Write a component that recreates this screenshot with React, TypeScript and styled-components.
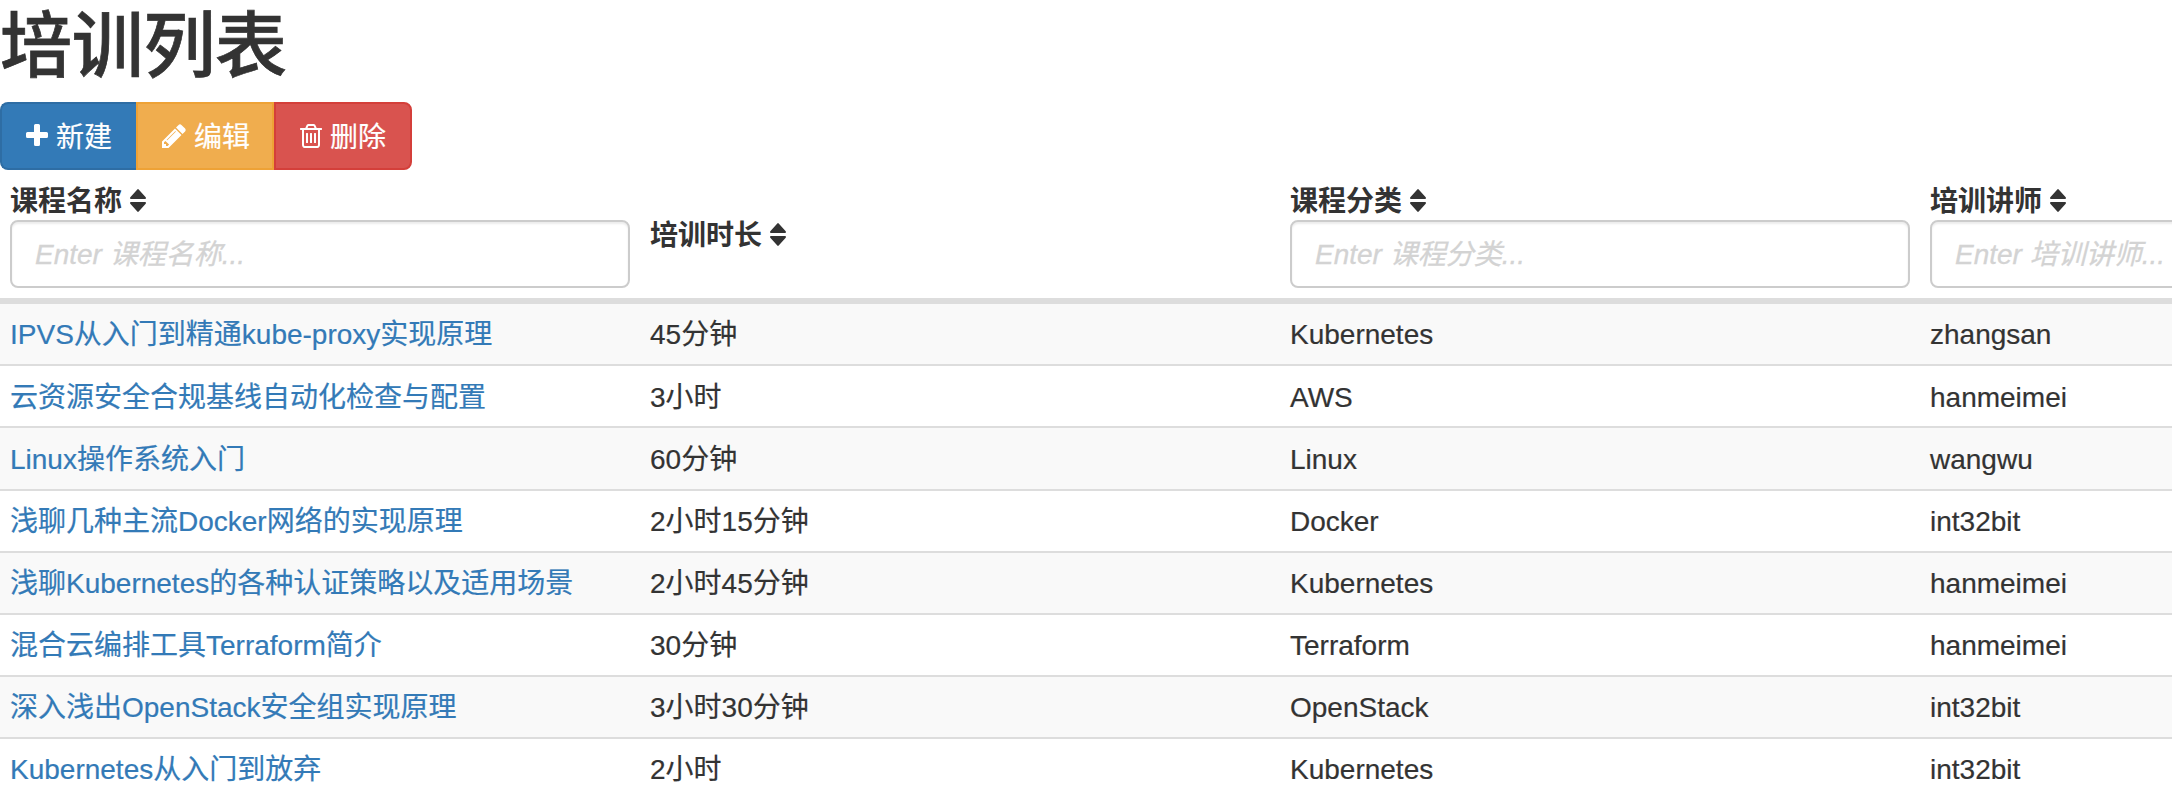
import React from "react";
import styled, { createGlobalStyle } from "styled-components";

const GlobalStyle = createGlobalStyle`
  *, *::before, *::after { box-sizing: border-box; }
  html, body { margin: 0; background: #fff; overflow: hidden; }
  body {
    color: #333;
    font-family: "Liberation Sans", "Noto Sans CJK SC", sans-serif;
    font-size: 28px;
    line-height: 40px;
    -webkit-text-stroke: 0.2px currentColor;
  }
`;

const Page = styled.main`
  width: 2172px;
  height: 805px;
  overflow: hidden;
`;

const Title = styled.h1`
  margin: 0;
  height: 102px;
  padding-top: 7px;
  font-size: 72px;
  font-weight: 500;
  line-height: 79px;
  letter-spacing: -0.3px;
  -webkit-text-stroke: 0.7px currentColor;
`;

const ButtonGroup = styled.div`
  display: flex;
  height: 68px;
`;

const tones = {
  primary: { fill: "#337ab7", edge: "#2e6da4" },
  warning: { fill: "#f0ad4e", edge: "#eea236" },
  danger: { fill: "#d9534f", edge: "#d43f3a" },
};

const Button = styled.button<{ $tone: keyof typeof tones }>`
  display: flex;
  align-items: center;
  width: 138px;
  margin: 0;
  padding: 0 0 0 24px;
  border: 2px solid ${(p) => tones[p.$tone].edge};
  background: ${(p) => tones[p.$tone].fill};
  color: #fff;
  font: inherit;
  white-space: nowrap;

  &:first-child { width: 136px; border-right: 0; border-radius: 8px 0 0 8px; }
  &:last-child { border-radius: 0 8px 8px 0; }
`;

const ButtonIcon = styled.svg<{ $width: number }>`
  flex: none;
  width: ${(p) => p.$width}px;
  height: 28px;
  margin-right: 8px;
  fill: currentColor;
`;

const ButtonLabel = styled.span`
  padding-top: 3px;
`;

const Table = styled.table`
  display: block;
  width: 2560px;
`;

const HeadGroup = styled.thead`
  display: block;
`;

const BodyGroup = styled.tbody`
  display: block;
`;

const HeadRow = styled.tr`
  display: grid;
  grid-template-columns: repeat(4, 640px);
  height: 132.2px;
  border-bottom: 4px solid #ddd;
`;

const HeadCell = styled.th`
  display: flex;
  flex-direction: column;
  justify-content: center;
  padding: 10px;
  text-align: left;
  font-weight: 700;
  -webkit-text-stroke: 0;
`;

const HeadLabel = styled.div`
  display: flex;
  align-items: center;
  height: 40px;
`;

const LabelText = styled.span`
  padding-top: 3px;
`;

const SortIcon = styled.svg`
  width: 16px;
  height: 23px;
  margin-left: 8px;
  fill: currentColor;
`;

const FilterInput = styled.input`
  display: block;
  width: 100%;
  height: 68px;
  padding: 13px 23px 11px;
  border: 2px solid #ccc;
  border-radius: 8px;
  box-shadow: inset 0 2px 2px rgba(0, 0, 0, 0.075);
  background: #fff;
  font: inherit;
  font-weight: 400;
  -webkit-text-stroke: 0.3px currentColor;

  &::placeholder {
    color: #d3d3d3;
    font-style: italic;
    opacity: 1;
  }
`;

const Row = styled.tr`
  display: grid;
  grid-template-columns: repeat(4, 640px);
  height: 62.14px;
  border-top: 2px solid #ddd;

  &:nth-child(odd) { background: #f9f9f9; }
`;

const Cell = styled.td`
  padding: 11.3px 10px 8.7px;
  white-space: nowrap;
`;

const CourseLink = styled.a`
  color: #337ab7;
  text-decoration: none;
`;

const columns = [
  { label: "课程名称", filter: true },
  { label: "培训时长", filter: false },
  { label: "课程分类", filter: true },
  { label: "培训讲师", filter: true },
];

const courses = [
  ["IPVS从入门到精通kube-proxy实现原理", "45分钟", "Kubernetes", "zhangsan"],
  ["云资源安全合规基线自动化检查与配置", "3小时", "AWS", "hanmeimei"],
  ["Linux操作系统入门", "60分钟", "Linux", "wangwu"],
  ["浅聊几种主流Docker网络的实现原理", "2小时15分钟", "Docker", "int32bit"],
  ["浅聊Kubernetes的各种认证策略以及适用场景", "2小时45分钟", "Kubernetes", "hanmeimei"],
  ["混合云编排工具Terraform简介", "30分钟", "Terraform", "hanmeimei"],
  ["深入浅出OpenStack安全组实现原理", "3小时30分钟", "OpenStack", "int32bit"],
  ["Kubernetes从入门到放弃", "2小时", "Kubernetes", "int32bit"],
];

export default function App() {
  return (
    <Page>
      <GlobalStyle />
      <Title>培训列表</Title>
      <ButtonGroup>
        <Button $tone="primary">
          <ButtonIcon $width={22} viewBox="0 0 22 28">
            <path d="M9.5 2h3q1.5 0 1.500 1.500V10h6.500q1.500 0 1.500 1.500v3q0 1.500-1.500 1.500H14v6.500q0 1.500-1.500 1.500h-3Q8 24 8 22.500V16H1.500Q0 16 0 14.500v-3Q0 10 1.500 10H8V3.500Q8 2 9.500 2z" />
          </ButtonIcon>
          <ButtonLabel>新建</ButtonLabel>
        </Button>
        <Button $tone="warning">
          <ButtonIcon $width={24} viewBox="0 0 24 28">
            <path d="M5.672 24l1.422-1.422-3.672-3.672-1.422 1.422v1.672h2v2h1.672zM13.844 9.500c0-0.203-0.141-0.344-0.344-0.344-0.094 0-0.187 0.031-0.266 0.109l-8.469 8.469c-0.078 0.078-0.109 0.172-0.109 0.266 0 0.203 0.141 0.344 0.344 0.344 0.094 0 0.187-0.031 0.266-0.109l8.469-8.469c0.078-0.078 0.109-0.172 0.109-0.266zM13 6.500l6.500 6.500-13 13h-6.500v-6.500zM23.672 8c0 0.531-0.219 1.047-0.578 1.406l-2.594 2.594-6.500-6.500 2.594-2.578c0.359-0.375 0.875-0.594 1.406-0.594s1.047 0.219 1.422 0.594l3.672 3.656c0.359 0.375 0.578 0.891 0.578 1.422z" />
          </ButtonIcon>
          <ButtonLabel>编辑</ButtonLabel>
        </Button>
        <Button $tone="danger">
          <ButtonIcon $width={22} viewBox="0 0 22 28">
            <path d="M6.500 11h1q.5 0 .5.500v9q0 .5-.5.500h-1q-.5 0-.5-.500v-9q0-.5.500-.500zM10.500 11h1q.5 0 .5.500v9q0 .5-.5.500h-1q-.5 0-.5-.500v-9q0-.5.500-.500zM14.500 11h1q.5 0 .5.500v9q0 .5-.5.500h-1q-.5 0-.5-.500v-9q0-.5.500-.500zM18 22.813v-14.812h-14v14.812c0 0.750 0.422 1.188 0.500 1.188h13c0.078 0 0.500-0.438 0.500-1.188zM7.500 6h7l-0.750-1.828c-0.047-0.063-0.187-0.156-0.266-0.172h-4.953c-0.094 0.016-0.219 0.109-0.266 0.172zM22 6.500v1c0 0.281-0.219 0.500-0.500 0.500h-1.500v14.812c0 1.719-1.125 3.187-2.500 3.187h-13c-1.375 0-2.500-1.406-2.500-3.125v-14.875h-1.500c-0.281 0-0.500-0.219-0.500-0.500v-1c0-0.281 0.219-0.500 0.500-0.500h4.828l1.094-2.609c0.313-0.766 1.250-1.391 2.078-1.391h5c0.828 0 1.766 0.625 2.078 1.391l1.094 2.609h4.828c0.281 0 0.500 0.219 0.500 0.500z" fillRule="evenodd" />
          </ButtonIcon>
          <ButtonLabel>删除</ButtonLabel>
        </Button>
      </ButtonGroup>
      <Table>
        <HeadGroup>
          <HeadRow>
            {columns.map(({ label, filter }) => (
              <HeadCell key={label}>
                <HeadLabel>
                  <LabelText>{label}</LabelText>
                  <SortIcon viewBox="0 0 16 23">
                    <path d="M7.300.4q.7-.7 1.400 0l7 7.800q.9 1.600-.7 1.800H1Q-.6 9.800.3 8.200zM1 13h14q1.600.2.700 1.800l-7 7.800q-.7.7-1.400 0l-7-7.800Q-.6 13.200 1 13z" />
                  </SortIcon>
                </HeadLabel>
                {filter && <FilterInput type="text" placeholder={`Enter ${label}...`} />}
              </HeadCell>
            ))}
          </HeadRow>
        </HeadGroup>
        <BodyGroup>
          {courses.map(([name, ...details]) => (
            <Row key={name}>
              <Cell><CourseLink href="#">{name}</CourseLink></Cell>
              {details.map((text, i) => <Cell key={i}>{text}</Cell>)}
            </Row>
          ))}
        </BodyGroup>
      </Table>
    </Page>
  );
}
